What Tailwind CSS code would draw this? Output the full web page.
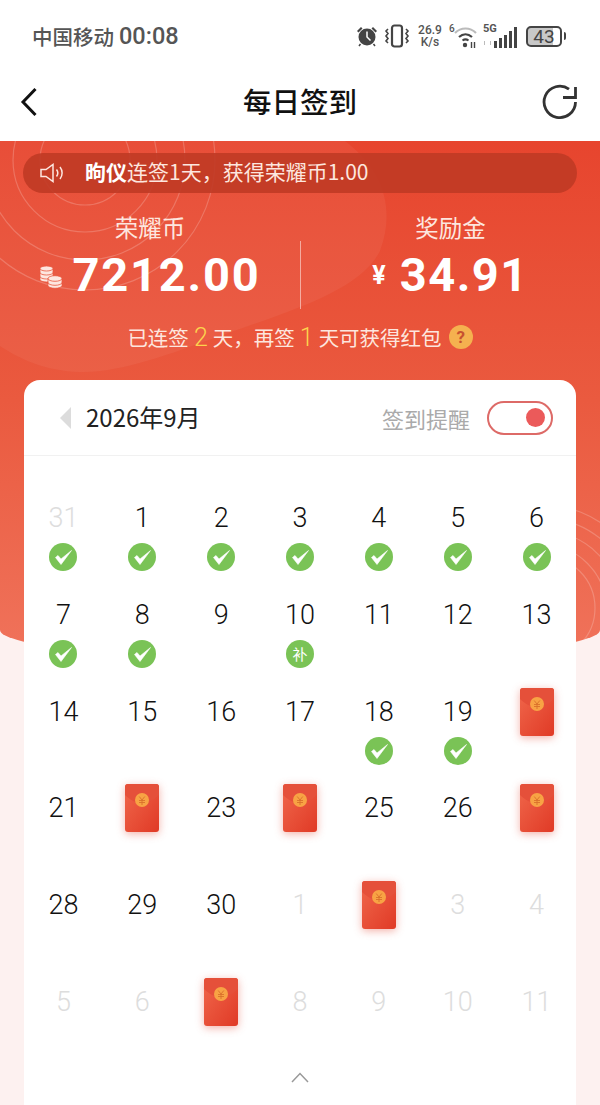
<!DOCTYPE html>
<html lang="zh">
<head>
<meta charset="UTF-8">
<meta name="viewport" content="width=device-width, initial-scale=1.0">
<title>每日签到</title>
<script src="https://cdn.jsdelivr.net/npm/@tailwindcss/browser@4"></script>
</head>
<body class="bg-white">
<!-- shared icons -->
<svg class="absolute w-0 h-0">
  <defs>
    <linearGradient id="env" x1="0" y1="0" x2="1" y2="1"><stop offset="0" stop-color="#f0674b"/><stop offset="1" stop-color="#e03a26"/></linearGradient>
  </defs>
  <symbol id="check" viewBox="0 0 28 28">
    <circle cx="14" cy="14" r="14" fill="#7ac356"/>
    <path d="M6.500 14.500L9 12.500l3 3.500L22.500 7.500 12 21.500z" fill="#fff" stroke="#fff" stroke-width=".6" stroke-linejoin="round"/>
  </symbol>
  <symbol id="packet" viewBox="0 0 34 48">
    <rect width="34" height="48" rx="3" fill="url(#env)"/>
    <path d="M0 11c5 5 11 8 17 8s12-3 17-8v-8a3 3 0 0 0-3-3H3a3 3 0 0 0-3 3z" fill="#e5503a"/>
    <circle cx="17" cy="16" r="7" fill="#f8a344"/>
    <path d="M14.200 12.500L17 16l2.800-3.500M14 16.500h6M14 18.500h6M17 16v5" fill="none" stroke="#d9702a" stroke-width=".9"/>
  </symbol>
</svg>

<div class="relative w-[600px] h-[1105px] overflow-hidden bg-[#fdf1f0] font-['Roboto','Noto_Sans_CJK_SC',sans-serif]">

  <!-- status bar -->
  <div class="h-[72px] bg-white flex items-center justify-between pl-[32px] pr-[34px] text-[#555]">
    <div class="flex items-center text-[20.5px] leading-none font-medium font-['Noto_Sans_CJK_SC',sans-serif]">中国移动<span class="ml-[5px] mt-[1px] text-[23.5px] font-['Roboto',sans-serif] font-medium">00:08</span></div>
    <div class="flex items-center h-[24px]">
      <svg class="w-[22px] h-[22px]" viewBox="0 0 22 22"><path d="M1 6l4-4 1.500 1.500-4 4zM21 6l-4-4-1.500 1.500 4 4z" fill="#444"/><circle cx="11" cy="12" r="8.500" fill="#444"/><path d="M11 6.500V12l3.500 3.500" stroke="#fff" stroke-width="1.500" fill="none"/><path d="M4.500 19l-1.500 2M17.500 19l1.500 2" stroke="#444" stroke-width="1.500"/></svg>
      <svg class="ml-[6px] w-[26px] h-[24px]" viewBox="0 0 26 24" fill="none" stroke="#444"><rect x="8" y="1.500" width="10" height="21" rx="2.500" stroke-width="2.200"/><path d="M4 5l-2 2 2 2.500-2 2.500 2 2.500-2 2.500 2 2M22 5l2 2-2 2.500 2 2.500-2 2.500 2 2.500-2 2" stroke-width="1.600"/></svg>
      <div class="ml-[6px] w-[28px] text-center text-[12px] leading-[12px] font-medium font-['Roboto',sans-serif]">26.9<br>K/s</div>
      <div class="ml-[5px] relative w-[29px] h-[24px]">
        <span class="absolute left-0 -top-[1px] text-[10px] font-medium leading-[12px]">6</span>
        <svg class="absolute left-[4px] top-0 w-[25px] h-[24px]" viewBox="0 0 25 24" fill="none"><path d="M2 9c6-6 15-6 21 0" stroke="#bbb" stroke-width="2.200"/><path d="M6 13c4-3.500 9-3.500 13 0" stroke="#444" stroke-width="2.200"/><path d="M9.500 16.500c2-1.500 4-1.500 6 0" stroke="#444" stroke-width="2"/><circle cx="12" cy="21" r="2.200" fill="#444"/><path d="M18.500 18v6M21.500 18v6" stroke="#444" stroke-width="1.400"/></svg>
      </div>
      <div class="ml-[5px] relative w-[34px] h-[24px]">
        <span class="absolute left-0 -top-[1px] text-[11px] leading-[12px] font-bold">5G</span>
        <div class="absolute left-[11px] bottom-0 flex items-end gap-[2px]"><i class="block w-[3px] h-[7px] bg-[#444]"></i><i class="block w-[3px] h-[10px] bg-[#444]"></i><i class="block w-[3px] h-[13px] bg-[#444]"></i><i class="block w-[3px] h-[17px] bg-[#444]"></i><i class="block w-[3px] h-[21px] bg-[#444]"></i></div>
        <span class="absolute left-[1px] bottom-[3px] w-[7px] h-[4px] border-x border-[#bbb]"></span>
      </div>
      <div class="ml-[9px] w-[36px] h-[21px] rounded-[5px] border-2 border-[#444] overflow-hidden flex items-center justify-center text-[19px] leading-none text-[#444] bg-[linear-gradient(to_right,#c8c8c8_78%,#fff_78%)]">43</div>
      <i class="block ml-[2px] w-[2px] h-[8px] bg-[#444] rounded-r-sm"></i>
    </div>
  </div>

  <!-- nav -->
  <div class="relative h-[69px] bg-white flex items-center justify-center">
    <svg class="absolute left-[20px] top-[15px] w-[18px] h-[30px]" viewBox="0 0 18 30" fill="none"><path d="M15.500 2L3 15l12.500 13" stroke="#111" stroke-width="3"/></svg>
    <div class="-mt-[11px] text-[28.5px] leading-none font-medium text-[#111] font-['Noto_Sans_CJK_SC',sans-serif]">每日签到</div>
    <svg class="absolute left-[542px] top-[12px] w-[36px] h-[36px]" viewBox="0 0 36 36" fill="none"><path d="M33.500 18A15.700 15.700 0 1 1 27 5.200" stroke="#333" stroke-width="2.800"/><path d="M21 13.500h12.500V3" stroke="#333" stroke-width="2.800"/></svg>
  </div>

  <!-- red header area -->
  <div class="relative">
    <div class="absolute left-0 right-0 top-0 h-[519px] overflow-hidden rounded-b-[50%_30px] bg-[linear-gradient(to_bottom,#e7452e,#ea5a3f_50%,#f0735b)]">
      <svg class="absolute left-0 top-0" width="600" height="519" viewBox="0 0 600 519" fill="none">
        <path d="M0 0H345C385 30 395 70 380 110C360 150 290 170 220 195C170 213 120 232 80 231C45 230 20 218 0 205Z" fill="#fff" fill-opacity=".05"/>
        <g stroke="#fff" stroke-opacity=".2" stroke-width="1.200">
          <circle cx="85" cy="19" r="45"/><circle cx="85" cy="19" r="72"/><circle cx="85" cy="19" r="100"/><circle cx="85" cy="19" r="130"/>
          <circle cx="543" cy="467" r="52"/><circle cx="543" cy="467" r="63"/><circle cx="543" cy="467" r="77"/><circle cx="543" cy="467" r="90"/><circle cx="543" cy="467" r="103"/>
        </g>
      </svg>
    </div>

    <div class="relative">
      <div class="pt-[12px] px-[23px]">
        <div class="h-[40px] rounded-full bg-[#c03a25]/90 flex items-center pl-[17px] text-[21px] leading-none text-[#fde6df] font-['Noto_Sans_CJK_SC',sans-serif]">
          <svg class="w-[26px] h-[20px]" viewBox="0 0 26 20" fill="none" stroke="#fde6df" stroke-width="1.500"><path d="M1 6.500h5L13 1.500v17L6 13.500H1z"/><path d="M16.500 6.500c1.500 2 1.500 5 0 7M20 4c2.800 3.500 2.800 8.500 0 12"/></svg>
          <span class="ml-[19px] mb-[3px] font-bold text-white">昫仪</span><span class="mb-[3px]">连签1天，获得荣耀币1.00</span>
        </div>
      </div>

      <div class="mt-[18px] flex h-[100px] text-white">
        <div class="w-[300px] flex flex-col items-center">
          <div class="text-[23.5px] leading-[32px] text-[#fde6df] font-['Noto_Sans_CJK_SC',sans-serif]">荣耀币</div>
          <div class="flex items-center mt-[2px] h-[58px]">
            <svg class="w-[24px] h-[24px] mr-[9px] mt-[5px]" viewBox="0 0 24 24" fill="#fde6df" stroke="#e8583f" stroke-width=".8">
              <path d="M1 3.500a6.500 2.500 0 0 1 13 0v11a6.500 2.500 0 0 1-13 0z"/><path d="M1 3.500a6.500 2.500 0 0 0 13 0M1 7.500a6.500 2.500 0 0 0 13 0M1 11.500a6.500 2.500 0 0 0 13 0" fill="none"/>
              <path d="M9 13.500a7 2.800 0 0 1 14 0v7a7 2.800 0 0 1-14 0z"/><path d="M9 13.500a7 2.800 0 0 0 14 0M9 17.500a7 2.800 0 0 0 14 0" fill="none"/>
            </svg>
            <span class="text-[47px] leading-none font-bold tracking-[1.8px]">7212.00</span>
          </div>
        </div>
        <div class="w-px h-[68px] mt-[30px] bg-white/50"></div>
        <div class="flex-1 flex flex-col items-center">
          <div class="text-[23.5px] leading-[32px] text-[#fde6df] font-['Noto_Sans_CJK_SC',sans-serif]">奖励金</div>
          <div class="flex items-center mt-[2px] h-[58px]">
            <span class="text-[25px] leading-none font-bold mr-[14px] mt-[3px]">¥</span>
            <span class="text-[47px] leading-none font-bold tracking-[1.5px]">34.91</span>
          </div>
        </div>
      </div>

      <div class="mt-[8px] h-[36px] flex items-center justify-center text-[20.5px] leading-none text-[#fde6df] font-['Noto_Sans_CJK_SC',sans-serif]">
        <span>已连签<span class="mx-[5px] text-[#fcd34d] font-['Roboto',sans-serif] text-[25px] font-light">2</span>天，再签<span class="mx-[5px] text-[#fcd34d] font-['Roboto',sans-serif] text-[25px] font-light">1</span>天可获得红包</span>
        <span class="ml-[7px] w-[24px] h-[24px] rounded-full bg-[#f5b14f] flex items-center justify-center text-[17px] font-bold text-[#c8502f] font-['Roboto',sans-serif]">?</span>
      </div>

      <!-- calendar card -->
      <div class="mt-[25px] mx-[24px] h-[740px] rounded-t-[16px] bg-white">
        <div class="h-[76px] border-b border-[#f1f1f1] flex items-center pl-[36px] pr-[23px]">
          <div class="w-0 h-0 border-y-[11px] border-y-transparent border-r-[11px] border-r-[#dcdcdc]"></div>
          <div class="ml-[15px] -mt-[1px] text-[24px] leading-none text-[#222] font-['Noto_Sans_CJK_SC',sans-serif]">2026年9月</div>
          <div class="ml-auto text-[22px] leading-none text-[#aaa] font-['Noto_Sans_CJK_SC',sans-serif]">签到提醒</div>
          <div class="ml-[17px] w-[66px] h-[34px] rounded-full border-[2.5px] border-[#dd6a67] flex items-center justify-end pr-[6px]"><div class="w-[19px] h-[19px] rounded-full bg-[#eb5a5a]"></div></div>
        </div>

        <div class="grid grid-cols-7 auto-rows-[96.8px] pt-[46px] text-[27px] leading-[32px] text-[#111] text-center font-light">
          <div class="flex flex-col items-center text-[#ddd]">31<svg class="mt-[9px] w-[28px] h-[28px]"><use href="#check"/></svg></div>
          <div class="flex flex-col items-center">1<svg class="mt-[9px] w-[28px] h-[28px]"><use href="#check"/></svg></div>
          <div class="flex flex-col items-center">2<svg class="mt-[9px] w-[28px] h-[28px]"><use href="#check"/></svg></div>
          <div class="flex flex-col items-center">3<svg class="mt-[9px] w-[28px] h-[28px]"><use href="#check"/></svg></div>
          <div class="flex flex-col items-center">4<svg class="mt-[9px] w-[28px] h-[28px]"><use href="#check"/></svg></div>
          <div class="flex flex-col items-center">5<svg class="mt-[9px] w-[28px] h-[28px]"><use href="#check"/></svg></div>
          <div class="flex flex-col items-center">6<svg class="mt-[9px] w-[28px] h-[28px]"><use href="#check"/></svg></div>

          <div class="flex flex-col items-center">7<svg class="mt-[9px] w-[28px] h-[28px]"><use href="#check"/></svg></div>
          <div class="flex flex-col items-center">8<svg class="mt-[9px] w-[28px] h-[28px]"><use href="#check"/></svg></div>
          <div>9</div>
          <div class="flex flex-col items-center">10<div class="mt-[9px] w-[28px] h-[28px] rounded-full bg-[#7ac356] text-white text-[15px] leading-[28px] font-normal font-['Noto_Sans_CJK_SC',sans-serif]">补</div></div>
          <div>11</div>
          <div>12</div>
          <div>13</div>

          <div>14</div>
          <div>15</div>
          <div>16</div>
          <div>17</div>
          <div class="flex flex-col items-center">18<svg class="mt-[9px] w-[28px] h-[28px]"><use href="#check"/></svg></div>
          <div class="flex flex-col items-center">19<svg class="mt-[9px] w-[28px] h-[28px]"><use href="#check"/></svg></div>
          <div class="flex justify-center"><svg class="-mt-[8px] w-[34px] h-[48px] drop-shadow-[0_2px_4px_rgba(226,60,40,0.4)]"><use href="#packet"/></svg></div>

          <div>21</div>
          <div class="flex justify-center"><svg class="-mt-[8px] w-[34px] h-[48px] drop-shadow-[0_2px_4px_rgba(226,60,40,0.4)]"><use href="#packet"/></svg></div>
          <div>23</div>
          <div class="flex justify-center"><svg class="-mt-[8px] w-[34px] h-[48px] drop-shadow-[0_2px_4px_rgba(226,60,40,0.4)]"><use href="#packet"/></svg></div>
          <div>25</div>
          <div>26</div>
          <div class="flex justify-center"><svg class="-mt-[8px] w-[34px] h-[48px] drop-shadow-[0_2px_4px_rgba(226,60,40,0.4)]"><use href="#packet"/></svg></div>

          <div>28</div>
          <div>29</div>
          <div>30</div>
          <div class="text-[#ddd]">1</div>
          <div class="flex justify-center"><svg class="-mt-[8px] w-[34px] h-[48px] drop-shadow-[0_2px_4px_rgba(226,60,40,0.4)]"><use href="#packet"/></svg></div>
          <div class="text-[#ddd]">3</div>
          <div class="text-[#ddd]">4</div>

          <div class="text-[#ddd]">5</div>
          <div class="text-[#ddd]">6</div>
          <div class="flex justify-center"><svg class="-mt-[8px] w-[34px] h-[48px] drop-shadow-[0_2px_4px_rgba(226,60,40,0.4)]"><use href="#packet"/></svg></div>
          <div class="text-[#ddd]">8</div>
          <div class="text-[#ddd]">9</div>
          <div class="text-[#ddd]">10</div>
          <div class="text-[#ddd]">11</div>
        </div>

        <svg class="mx-auto -mt-[12px] w-[20px] h-[12px]" viewBox="0 0 20 12" fill="none"><path d="M2 11l8-8.500 8 8.500" stroke="#999" stroke-width="1.500"/></svg>
      </div>
    </div>
  </div>
</div>
</body>
</html>
